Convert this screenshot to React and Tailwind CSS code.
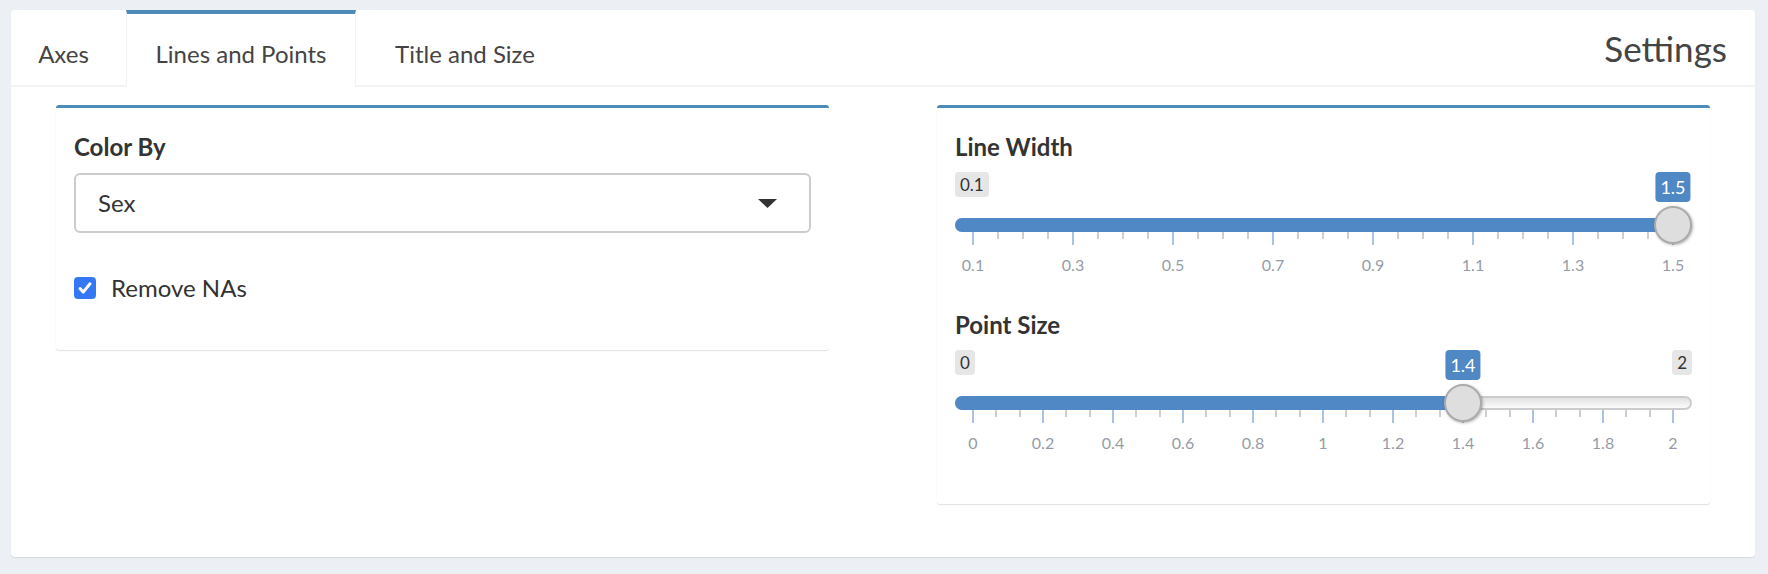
import React from 'react';

const sliders = [
  { id: 'lw', label: 'Line Width', min: 0.1, max: 1.5, value: 1.5, step: 0.2, minors: 3 },
  { id: 'ps', label: 'Point Size', min: 0, max: 2, value: 1.4, step: 0.2, minors: 2 },
];

const tabs = [
  { id: 'axes', label: 'Axes', width: 'w-[105px]' },
  { id: 'lines', label: 'Lines and Points', width: 'w-[230px]' },
  { id: 'title', label: 'Title and Size', width: 'w-[198px]' },
];

const fmt = (v) => String(Math.round(v * 10) / 10);

// grid inset = handle radius, track width 736 -> grid 700
const GRID = 700;
const INSET = 18;

const Slider = ({ min, max, value, step, minors }) => {
  const pct = (value - min) / (max - min);
  const majors = Math.round((max - min) / step);
  const ticks = [];
  for (let i = 0; i <= majors; i++) {
    ticks.push({ pos: i / majors, major: true, label: fmt(min + i * step) });
    if (i < majors) {
      for (let j = 1; j <= minors; j++) {
        ticks.push({ pos: (i + j / (minors + 1)) / majors, major: false });
      }
    }
  }
  const center = INSET + pct * GRID;
  const atMax = value === max;

  return (
    <div className="relative w-full">
      {/* min / max labels */}
      <div className="flex items-start justify-between h-[30px]">
        <span className="h-[25px] px-[5px] rounded-[4px] bg-[#e6e6e6] text-[#333] text-[17px] leading-[25px]">
          {fmt(min)}
        </span>
        {!atMax && (
          <span className="h-[25px] px-[5px] rounded-[4px] bg-[#e6e6e6] text-[#333] text-[17px] leading-[25px]">
            {fmt(max)}
          </span>
        )}
      </div>
      {/* current value */}
      <span
        className="absolute top-0 h-[30px] px-[5px] -translate-x-1/2 rounded-[4px] bg-[#5088c5] text-white text-[18px] leading-[30px]"
        style={{ left: center }}
      >
        {fmt(value)}
      </span>

      {/* track */}
      <div className="relative mt-[16px] h-[14px] rounded-full border-2 border-[#cccccc] bg-gradient-to-b from-[#e2e2e2] to-[#fbfbfb]">
        <div
          className="absolute -left-[2px] -top-[2px] h-[14px] rounded-l-full bg-[#5088c5]"
          style={{ width: center }}
        />
        <div
          className="absolute z-10 -top-[14px] h-[38px] w-[38px] rounded-full border-2 border-[#ababab] bg-[#dedede] shadow-[1px_1px_3px_rgba(0,0,0,0.3)]"
          style={{ left: center - 21 }}
        />
      </div>

      {/* grid */}
      <div className="relative mx-[18px] h-[45px]">
        {ticks.map((t, i) => (
          <span
            key={i}
            className={`absolute top-0 w-[2px] -ml-[1px] ${t.major ? 'h-[13px] bg-[#a9c3e6]' : 'h-[7px] bg-[#cfcfcf]'}`}
            style={{ left: t.pos * GRID }}
          />
        ))}
        {ticks
          .filter((t) => t.major)
          .map((t, i) => (
            <span
              key={'l' + i}
              className="absolute top-[23px] -translate-x-1/2 text-[16px] leading-[20px] text-[#959ca7]"
              style={{ left: t.pos * GRID }}
            >
              {t.label}
            </span>
          ))}
      </div>
    </div>
  );
};

const Box = ({ children, className }) => (
  <div
    className={`bg-white rounded-[3px] border-t-[3px] border-t-[#4f8bb9] shadow-[0_1px_1px_rgba(0,0,0,0.12)] px-[18px] pt-[24px] ${className}`}
  >
    {children}
  </div>
);

const App = () => {
  const activeTab = 'lines';

  return (
    <div className="min-h-screen bg-[#ecf0f5] pt-[10px] pl-[11px] pr-[13px] pb-[16px] font-[Lato,'Liberation_Sans',sans-serif]">
      <div className="bg-white rounded-[4px] shadow-[0_1px_1px_rgba(0,0,0,0.1)]">
        {/* Header with tabs */}
        <div className="flex items-start border-b-2 border-[#f4f4f4]">
          {tabs.map((tab) => (
            <div
              key={tab.id}
              className={`${tab.width} mr-[10px] -mb-[2px] pt-[25px] pb-[18px] text-center text-[24px] leading-[30px] text-[#444] border-t-4 border-x ${
                activeTab === tab.id
                  ? 'bg-white border-t-[#4f8bb9] border-x-[#f4f4f4]'
                  : 'border-t-transparent border-x-transparent'
              }`}
            >
              {tab.label}
            </div>
          ))}
          <div className="ml-auto pr-[28px] pt-[20px] text-[35px] leading-[36px] text-[#444]">Settings</div>
        </div>

        {/* Content */}
        <div className="grid grid-cols-2 gap-x-[108px] items-start px-[45px] pt-[18px] pb-[53px]">
          <Box className="pb-[47px]">
            <div className="text-[24px] leading-[29px] font-bold text-[#333]">Color By</div>
            <div className="mt-[12px] h-[60px] flex items-center justify-between rounded-[6px] border-2 border-[#cccccc] pl-[22px] pr-[32px]">
              <span className="text-[24px] text-[#333]">Sex</span>
              <svg width="19" height="9" viewBox="0 0 19 9">
                <polygon points="0,0 19,0 9.5,9" fill="#333" />
              </svg>
            </div>
            <div className="mt-[40px] h-[30px] flex items-center gap-[15px]">
              <span className="h-[22px] w-[22px] rounded-[4px] bg-[#3478f6] flex items-center justify-center">
                <svg width="18" height="18" viewBox="0 0 18 18">
                  <path d="M4 9.5l3.2 3.6L14 4.8" stroke="white" strokeWidth="3" fill="none" strokeLinecap="round" strokeLinejoin="round" />
                </svg>
              </span>
              <span className="text-[24px] text-[#333]">Remove NAs</span>
            </div>
          </Box>

          <Box className="pb-[49px]">
            {sliders.map((s, i) => (
              <div key={s.id} className={i > 0 ? 'mt-[33px]' : ''}>
                <div className="text-[24px] leading-[29px] font-bold text-[#333]">{s.label}</div>
                <div className="mt-[11px]">
                  <Slider {...s} />
                </div>
              </div>
            ))}
          </Box>
        </div>
      </div>
    </div>
  );
};

export default App;
